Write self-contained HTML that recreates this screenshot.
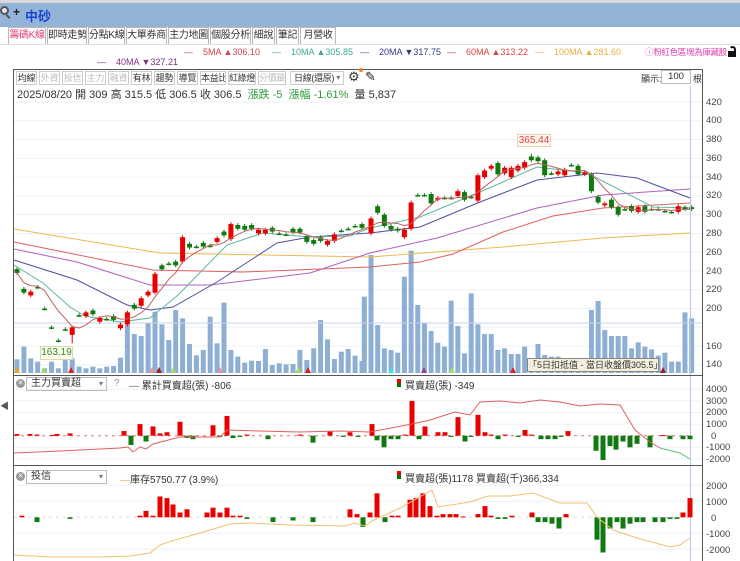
<!DOCTYPE html>
<html><head><meta charset="utf-8">
<style>
*{margin:0;padding:0;box-sizing:border-box}
body{width:740px;height:561px;overflow:hidden;background:#fff;font-family:"Liberation Sans","Noto Sans CJK TC",sans-serif;position:relative;color:#333}
.a{position:absolute;white-space:nowrap}
#top{left:0;top:0;width:740px;height:3px;background:#d8d8d8}
#bar{left:0;top:3px;width:740px;height:24px;background:#93b3d9}
.tab{position:absolute;top:27px;height:18px;border:1px solid #b8b8b8;border-bottom:none;font-size:10px;line-height:16px;text-align:center;color:#333;background:#fff;white-space:nowrap;overflow:hidden;letter-spacing:-0.3px}
.tb{position:absolute;top:71px;height:14px;border:1px solid #ccc;font-size:9px;line-height:12px;text-align:center;color:#333;background:#fff;white-space:nowrap;overflow:hidden;letter-spacing:-0.3px}
.tb.d{color:#bbb}
.ax{position:absolute;left:706px;font-size:9.5px;color:#444}
.sel{position:absolute;left:26px;width:81px;height:14px;border:1px solid #bbb;font-size:10px;line-height:12px;padding-left:4px;color:#333;white-space:nowrap}
.sel:after{content:"▾";position:absolute;right:3px;top:0;font-size:8px;color:#777}
.xc{position:absolute;left:16px;width:9px;height:9px;border-radius:50%;background:#999;color:#fff;font-size:7px;line-height:9px;text-align:center}
.lg{font-size:9px}
</style></head><body>
<div class="a" id="top"></div>
<div class="a" id="bar"></div>
<div class="a" style="left:0;top:6px;width:9px;height:9px;border:2px solid #555;border-radius:50%;background:#dde6f2"></div>
<div class="a" style="left:7px;top:14px;width:2px;height:5px;background:#555;transform:rotate(-45deg)"></div>
<div class="a" style="left:13px;top:5px;font-size:12px;font-weight:bold;color:#222">+</div>
<div class="a" style="left:25px;top:6px;font-size:13px;font-weight:bold;color:#1848d0">中砂</div>

<div class="tab" style="left:8px;width:38px;color:#e04078">籌碼K線</div>
<div class="tab" style="left:47px;width:40px">即時走勢</div>
<div class="tab" style="left:88px;width:37px">分點K線</div>
<div class="tab" style="left:126px;width:41px">大單券商</div>
<div class="tab" style="left:168px;width:41px">主力地圖</div>
<div class="tab" style="left:210px;width:41px">個股分析</div>
<div class="tab" style="left:252px;width:23px">細說</div>
<div class="tab" style="left:276px;width:23px">筆記</div>
<div class="tab" style="left:300px;width:36px">月營收</div>
<div class="a" style="left:0;top:44px;width:740px;height:1px;background:#ddd"></div>

<div class="a lg" style="left:184px;top:47px;color:#d04050">—&nbsp;&nbsp;&nbsp;&nbsp;5MA ▲306.10</div>
<div class="a lg" style="left:272px;top:47px;color:#40a890">—&nbsp;&nbsp;&nbsp;&nbsp;10MA ▲305.85</div>
<div class="a lg" style="left:360px;top:47px;color:#303880"><span style="color:#505090">—</span>&nbsp;&nbsp;&nbsp;&nbsp;20MA ▼317.75</div>
<div class="a lg" style="left:447px;top:47px;color:#e04040">—&nbsp;&nbsp;&nbsp;&nbsp;60MA ▲313.22</div>
<div class="a lg" style="left:535px;top:47px;color:#e8b040">—&nbsp;&nbsp;&nbsp;&nbsp;100MA ▲281.60</div>
<div class="a" style="left:645px;top:46px;font-size:8.5px;color:#e040b0;letter-spacing:-0.3px">ⓘ粉紅色區塊為庫藏股</div>
<div class="a" style="left:729px;top:46px;width:7px;height:6px;border:2px solid #111;border-bottom:none;border-radius:4px 4px 0 0;border-left-color:transparent"></div>
<div class="a" style="left:728px;top:51px;width:8px;height:6px;background:#111"></div>
<div class="a lg" style="left:97px;top:57px;color:#803080">—&nbsp;&nbsp;&nbsp;&nbsp;40MA ▼327.21</div>

<div class="a" style="left:13px;top:69px;width:690px;height:492px;border:1px solid #555;border-bottom:none"></div>

<div class="tb" style="left:16px;width:21px">均線</div>
<div class="tb d" style="left:39px;width:21px">外資</div>
<div class="tb d" style="left:62px;width:21px">投信</div>
<div class="tb d" style="left:85px;width:21px">主力</div>
<div class="tb d" style="left:108px;width:21px">融資</div>
<div class="tb" style="left:131px;width:21px">有林</div>
<div class="tb" style="left:154px;width:21px">趨勢</div>
<div class="tb" style="left:177px;width:21px">導覽</div>
<div class="tb" style="left:200px;width:26px">本益比</div>
<div class="tb" style="left:228px;width:28px">紅綠燈</div>
<div class="tb d" style="left:258px;width:28px">分價籤</div>
<div class="tb" style="left:290px;width:54px;text-align:left;padding-left:3px">日線(還原)<span style="position:absolute;right:3px;font-size:8px;color:#777">▾</span></div>
<div class="a" style="left:348px;top:69px;font-size:13px;color:#333">⚙</div>
<div class="a" style="left:359px;top:68px;width:4px;height:4px;border-radius:50%;background:#f08020"></div>
<div class="a" style="left:365px;top:69px;font-size:13px;color:#222">✎</div>
<div class="a" style="left:641px;top:72px;font-size:9px;color:#333">顯示:</div>
<div class="a" style="left:661px;top:70px;width:30px;height:14px;border:1px solid #bbb;font-size:9.5px;line-height:12px;text-align:center">100</div>
<div class="a" style="left:693px;top:72px;font-size:9px;color:#333">根</div>

<div class="a" style="left:17px;top:86px;font-size:11px;color:#333">2025/08/20 開 309 高 315.5 低 306.5 收 306.5 &nbsp;<span style="color:#2a9a3a">漲跌 -5 &nbsp;漲幅 -1.61%</span> &nbsp;量 5,837</div>

<div class="ax" style="top:97px">420</div><div class="ax" style="top:115px">400</div><div class="ax" style="top:134px">380</div><div class="ax" style="top:153px">360</div><div class="ax" style="top:172px">340</div><div class="ax" style="top:190px">320</div><div class="ax" style="top:209px">300</div><div class="ax" style="top:228px">280</div><div class="ax" style="top:247px">260</div><div class="ax" style="top:266px">240</div><div class="ax" style="top:284px">220</div><div class="ax" style="top:303px">200</div><div class="ax" style="top:341px">160</div><div class="ax" style="top:359px">140</div>

<div class="ax" style="top:384px">4000</div><div class="ax" style="top:396px">3000</div><div class="ax" style="top:407px">2000</div><div class="ax" style="top:419px">1000</div><div class="ax" style="top:431px;left:711px">0</div><div class="ax" style="top:442px">-1000</div><div class="ax" style="top:454px">-2000</div>
<div class="ax" style="top:481px">2000</div><div class="ax" style="top:497px">1000</div><div class="ax" style="top:513px;left:711px">0</div><div class="ax" style="top:529px">-1000</div><div class="ax" style="top:545px">-2000</div>

<svg id="s" class="a" style="left:0;top:0" width="740" height="561" xmlns="http://www.w3.org/2000/svg"></svg>

<div class="a" style="left:0;top:399px;font-size:9px;color:#555">◀</div>
<div class="xc" style="top:379px">✕</div>
<div class="sel" style="top:377px">主力買賣超</div>
<div class="a" style="left:114px;top:378px;font-size:10px;color:#999">?</div>
<div class="a" style="left:129px;top:377px;font-size:10px;color:#333"><span style="color:#666">—</span> 累計買賣超(張) -806</div>
<div class="a" style="left:397px;top:379px;width:4px;height:4px;background:#e00"></div>
<div class="a" style="left:397px;top:383px;width:4px;height:4px;background:#070"></div>
<div class="a" style="left:405px;top:377px;font-size:10px;color:#333">買賣超(張) -349</div>

<div class="xc" style="top:472px">✕</div>
<div class="sel" style="top:470px">投信</div>
<div class="a" style="left:120px;top:471px;font-size:10px;color:#333"><span style="color:#e8b040">—</span>庫存5750.77 (3.9%)</div>
<div class="a" style="left:397px;top:471px;width:4px;height:4px;background:#e00"></div>
<div class="a" style="left:397px;top:475px;width:4px;height:4px;background:#070"></div>
<div class="a" style="left:405px;top:470px;font-size:10px;color:#333">買賣超(張)1178 買賣超(千)366,334</div>

<div class="a" style="left:40px;top:346px;width:33px;height:14px;border:1px solid #d8d8b0;background:#fbfbe8;font-size:10px;line-height:12px;text-align:center;color:#3a8a3a">163.19</div>
<div class="a" style="left:517px;top:134px;width:34px;height:13px;border:1px solid #e8d0b0;background:#fff8f0;font-size:10px;line-height:11px;text-align:center;color:#e04040">365.44</div>
<div class="a" style="left:527px;top:358px;width:132px;height:14px;border:1px solid #888;background:#f4efdc;font-size:9px;line-height:12px;text-align:center;color:#333;overflow:hidden">「5日扣抵值 - 當日收盤價305.5」</div>

<script>
var S=document.getElementById('s'),h='';
function Y(p){return 102+(420-p)*0.939}
var NL=51;
function X(i){return i<NL?17+i*6.9:371+(i-NL)*6.68}
function L(pts,c,w){h+='<polyline fill="none" stroke="'+c+'" stroke-width="'+(w||1)+'" points="'+pts.map(function(p){return p.join(',')}).join(' ')+'"/>'}
function R(x,y,w,hh,c){if(hh<0){y+=hh;hh=-hh}h+='<rect x="'+x+'" y="'+y+'" width="'+w+'" height="'+Math.max(hh,1)+'" fill="'+c+'"/>'}
[420,400,380,360,340,320,300,280,260,240,220,200,180,160,140].forEach(function(p){h+='<line x1="14" x2="702" y1="'+Y(p)+'" y2="'+Y(p)+'" stroke="#eef0f5"/>'});
[4000,3000,2000,1000,-1000,-2000].forEach(function(v){var y=435.7-v*0.0116;h+='<line x1="14" x2="702" y1="'+y+'" y2="'+y+'" stroke="#eef0f5"/>'});
[2000,1000,-1000,-2000].forEach(function(v){var y=517.3-v*0.016;h+='<line x1="14" x2="702" y1="'+y+'" y2="'+y+'" stroke="#eef0f5"/>'});
var vl=[688,650,685,695,715,695,715,685,685,710,715,710,715,710,708,683,585,612,618,578,545,583,630,540,565,642,676,660,560,640,518,660,680,698,692,693,657,705,700,703,702,660,690,655,570,628,687,665,657,677,693];
var vr=[500,375,585,655,660,668,440,362,525,578,603,638,650,512,588,670,490,583,612,612,660,655,672,672,650,690,642,675,680,680,700,700,690,690,540,513,600,618,618,618,655,637,650,658,677,668,695,695,547,565];
vl.forEach(function(z,i){var t=130+z/3;R(17+i*6.9-2.5,t,5,373-t,'#8eafd4')});
vr.forEach(function(z,j){var t=130+z/3;R(371+(j-1)*6.68-2.5,t,5,373-t,'#8eafd4')});
h+='<line x1="14" x2="702" y1="323" y2="323" stroke="#c8d0f0"/>';
[[17,'#f0a030'],[44,'#a0e060'],[71,'#e02020'],[152,'#f09090'],[159,'#a02030'],[173,'#a0e060'],[220,'#f09090'],[298,'#a0e060'],[308,'#e02020'],[391,'#40e0e0'],[424,'#9040a0'],[452,'#a0e060'],[513,'#e02020'],[663,'#a02030']].forEach(function(m){h+='<polygon points="'+(m[0]-3)+',373 '+(m[0]+3)+',373 '+m[0]+',367" fill="'+m[1]+'"/>'});
L([[14,229],[160,253],[370,257],[503,247],[603,238],[690,233]],'#f0b850');
L([[14,242],[153,270],[243,272],[370,267],[420,262],[453,254],[503,232],[553,216],[603,208],[690,203]],'#e06060');
L([[14,249],[77,262],[150,285],[210,285],[310,273],[370,253],[437,238],[537,208],[603,195],[690,189]],'#b060c0');
L([[14,260],[77,280],[127,305],[150,310],[173,307],[217,282],[277,243],[310,237],[370,233],[420,227],[480,202],[537,180],[597,173],[637,178],[690,198]],'#5050a0');
L([[14,265],[43,283],[70,307],[85,316],[120,322],[150,318],[177,296],[227,245],[263,233],[310,237],[350,236],[370,228],[420,217],[480,192],[537,167],[587,173],[653,207],[690,208]],'#5cb8a0');
var left=[[238,'g'],[217,'g'],[218,'r'],[223,'d'],[200,'d'],[180,'d'],[166,'d'],[178,'d'],[180,'r',8],[193,'d'],[196,'r'],[194,'g'],[190,'r'],[189,'d'],[188,'g'],[183,'r'],[196,'r',13],[200,'g'],[211,'r',8],[218,'r'],[237,'r',20],[242,'g'],[248,'d'],[246,'g'],[276,'r',26],[265,'g'],[266,'d'],[266,'g'],[267,'d'],[275,'r'],[278,'g'],[290,'r',16],[285,'g'],[284,'g'],[285,'g'],[284,'r'],[284,'r'],[282,'g'],[280,'d'],[279,'d'],[281,'g'],[281,'g'],[271,'g',6],[269,'g'],[272,'g'],[272,'r'],[279,'r',7],[283,'d'],[285,'d'],[288,'d'],[286,'g']];
var right=[[280,296],[309,302],[300,288],[288,284],[285,283],[276,284],[285,313],[321,321],[321,321],[322,312],[316,318],[318,318],[318,318],[320,325],[324,316],[319,319],[315,342],[340,347],[349,352],[355,343],[344,350],[340,350],[347,352],[350,356],[362,358],[361,357],[358,342],[344,344],[343,346],[342,348],[353,353],[352,343],[343,345],[343,325],[319,313],[310,312],[316,308],[308,300],[306,306],[309,304],[303,308],[309,303],[306,306],[306,306],[304,304],[303,303],[303,309],[308,306],[308,306]];
var cs=[];
left.forEach(function(c){var s=c[2]||4,o,cl=c[0];if(c[1]=='r')o=cl-s;else if(c[1]=='g')o=cl+s;else o=cl;cs.push([o,cl])});
right.forEach(function(c){cs.push(c)});
var ma5=[];
cs.forEach(function(c,i){var x=X(i),hi=Math.max(c[0],c[1])+2,lo=Math.min(c[0],c[1])-2;if(i==8)lo=163;if(i==NL+24)hi=365;var col=c[1]>c[0]?'#e80000':'#107a10';
h+='<line x1="'+x+'" x2="'+x+'" y1="'+Y(hi)+'" y2="'+Y(lo)+'" stroke="'+col+'"/>';
R(x-2.5,Y(Math.max(c[0],c[1])),5,Math.max(Y(Math.min(c[0],c[1]))-Y(Math.max(c[0],c[1])),1.5),col);
var s=0,n=0;for(var k=Math.max(0,i-4);k<=i;k++){s+=cs[k][1];n++}ma5.push([x,Y(s/n)]);});
L(ma5,'#c06060');
h+='<line x1="690.5" x2="690.5" y1="86" y2="561" stroke="#b8c4ec"/>';
h+='<line x1="13" x2="703" y1="375.5" y2="375.5" stroke="#555"/><line x1="13" x2="703" y1="465.5" y2="465.5" stroke="#555"/>';
h+='<line x1="14" x2="690" y1="435.7" y2="435.7" stroke="#e07070" stroke-dasharray="3,4"/>';
var b2=[[17,150],[30,150],[37,100],[53,50],[57,150],[70,200],[124,400],[131,-800],[140,1000],[146,-500],[153,800],[160,200],[167,300],[180,1200],[187,-200],[193,-300],[213,900],[220,-100],[227,1700],[233,-200],[240,-100],[247,100],[268,-300],[300,100],[313,-600],[330,400],[343,-100],[350,300],[358,-100],[372,1000],[377,-400],[384,-1000],[391,-300],[398,-300],[405,100],[412,3000],[419,-300],[425,800],[438,300],[445,300],[451,-100],[458,1600],[465,-500],[471,-100],[478,1800],[485,300],[491,100],[498,-300],[505,100],[518,-100],[525,500],[531,100],[541,-300],[548,-300],[555,-300],[561,-100],[568,400],[596,-1300],[603,-2100],[610,-900],[616,-1200],[623,-500],[630,-1000],[637,-700],[650,-1000],[663,50],[670,-300],[683,-300],[690,-300]];
b2.forEach(function(b){R(b[0]-2.5,435.7,5,-b[1]*0.0116,b[1]>0?'#e80000':'#107a10')});
L([[14,453],[60,451],[120,448],[128,447],[133,452],[140,447],[146,449],[153,444],[180,437],[220,437],[227,430],[260,431],[300,432],[340,431],[370,432],[412,424],[430,420],[455,412],[470,415],[480,402],[500,401],[520,403],[540,400],[560,402],[580,406],[600,404],[620,405],[635,430],[650,442],[660,448]],'#e06060');
L([[660,448],[680,453],[690,459]],'#60c070');
h+='<line x1="14" x2="690" y1="517.3" y2="517.3" stroke="#ddd" stroke-dasharray="3,4"/>';
var b3=[[22,100],[37,-300],[70,-100],[140,100],[146,400],[153,100],[160,1300],[167,1200],[173,800],[180,300],[187,500],[207,300],[213,600],[220,300],[227,600],[233,100],[240,100],[247,-100],[273,-300],[293,-200],[313,-300],[350,500],[357,200],[363,-600],[370,300],[377,1500],[385,-300],[392,100],[398,100],[410,1100],[416,1200],[423,1500],[430,700],[437,100],[443,200],[450,200],[456,200],[463,50],[478,200],[485,700],[491,100],[498,-100],[505,-100],[512,100],[532,300],[538,-300],[545,-300],[552,-400],[559,-700],[566,200],[597,-1400],[603,-2200],[610,-700],[617,-300],[623,-700],[630,-400],[637,-300],[643,-300],[655,-300],[663,-300],[670,-100],[677,-100],[683,300],[690,1200]];
b3.forEach(function(b){R(b[0]-2.5,517.3,5,-b[1]*0.016,b[1]>0?'#e80000':'#107a10')});
L([[14,555],[50,557],[100,557],[130,556],[150,553],[160,545],[175,540],[200,533],[210,530],[230,524],[250,523],[290,525],[345,526],[355,523],[365,526],[372,521],[400,508],[432,490],[438,507],[470,502],[488,496],[510,496],[533,493],[560,503],[587,503],[597,517],[613,530],[637,538],[670,547],[680,545],[690,538]],'#f0c070');
S.innerHTML=h;
</script>
</body></html>
